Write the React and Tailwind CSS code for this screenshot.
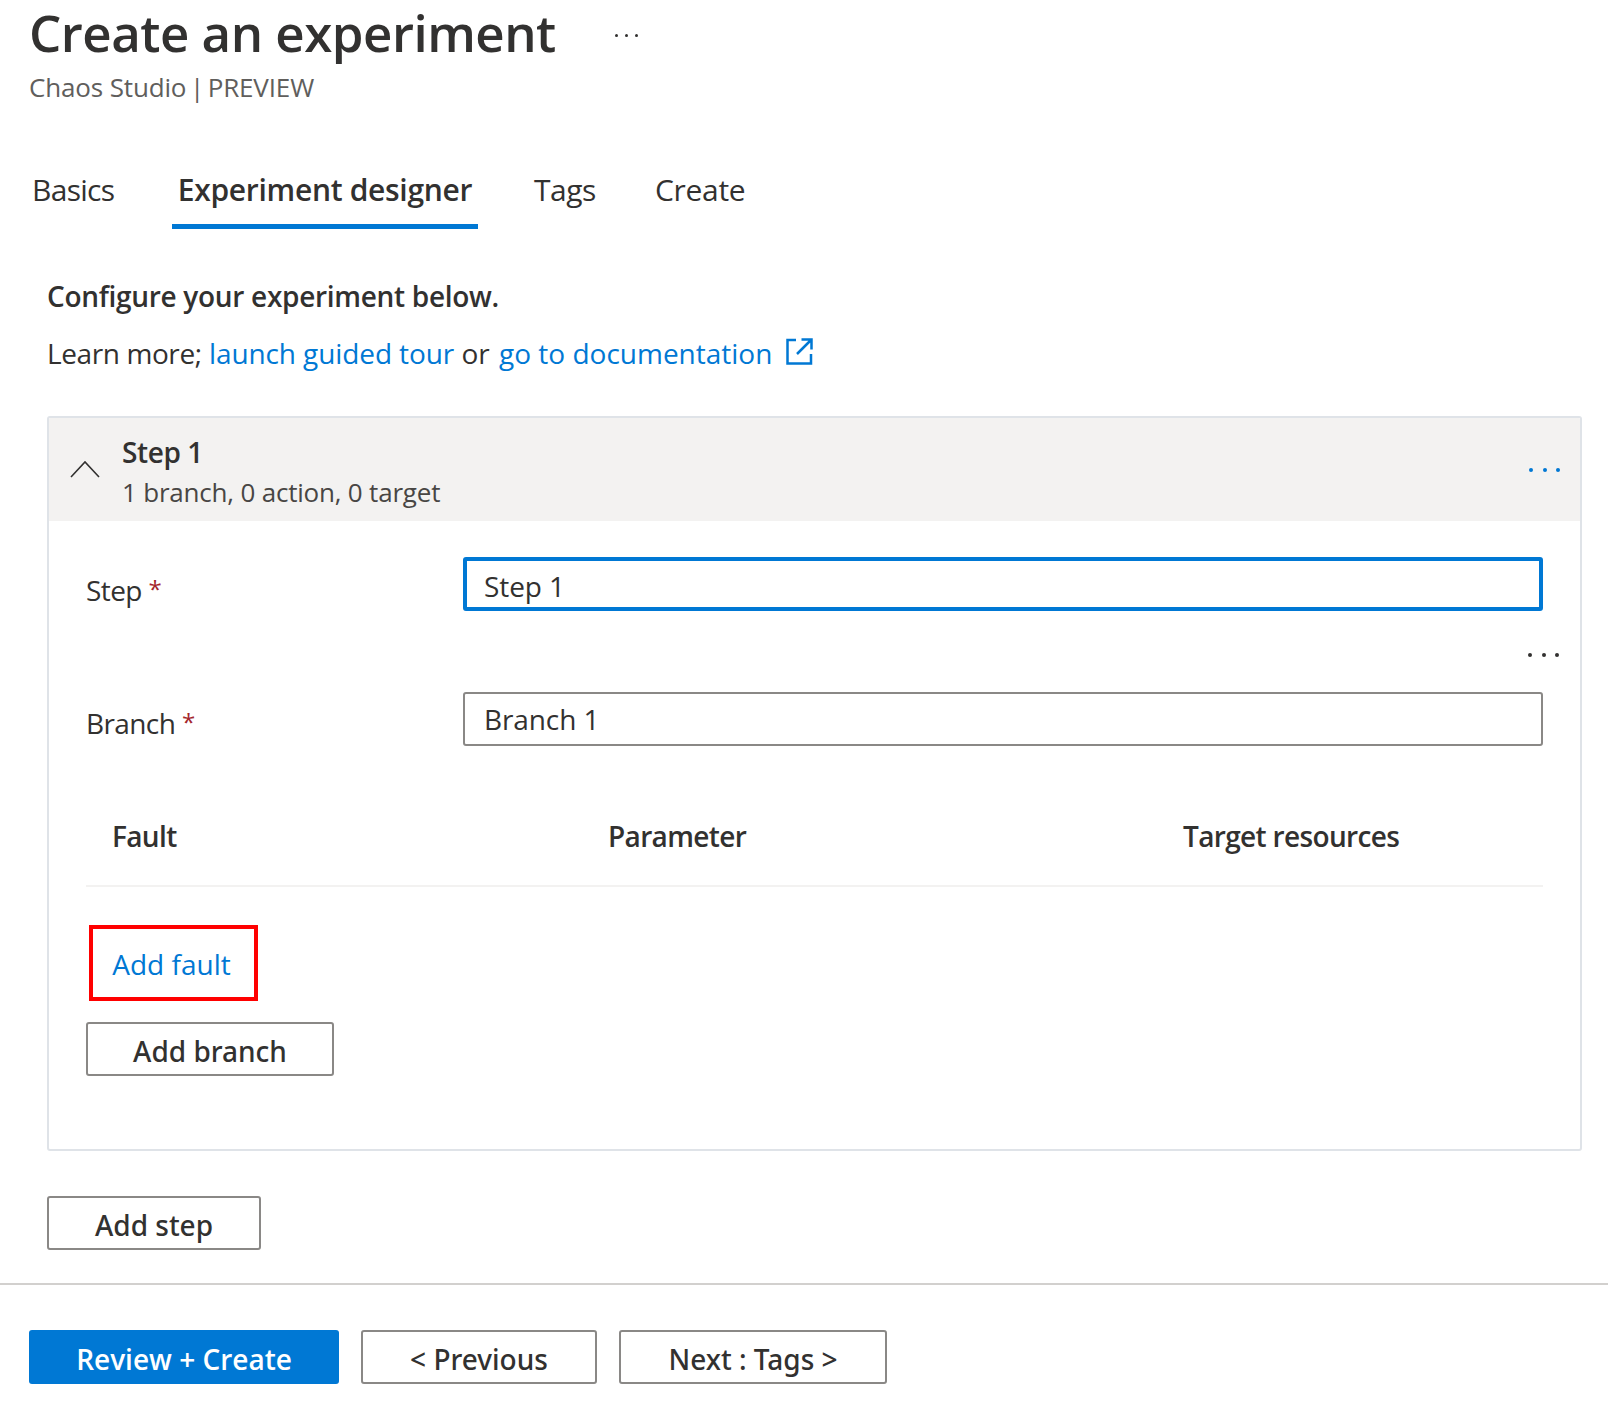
const tabs = [
  { label: 'Basics', className: 'w-[143px] pl-[3px] tracking-[-0.7px] pt-[1px]' },
  { label: 'Experiment designer', className: 'w-[306px] justify-center pt-[6px] font-semibold tracking-[-0.3px] border-b-[5px] border-[#0078d4]' },
  { label: 'Tags', className: 'w-[177px] pl-[56px] tracking-[-0.5px] pt-[1px]' },
  { label: 'Create', className: 'tracking-[-0.3px] pt-[1px]' },
];

function Dots({ color = 'bg-[#323130]' }) {
  return (
    <div className="flex gap-[9.5px]">
      <span className={`h-[4px] w-[4px] rounded-full ${color}`} />
      <span className={`h-[4px] w-[4px] rounded-full ${color}`} />
      <span className={`h-[4px] w-[4px] rounded-full ${color}`} />
    </div>
  );
}

function Field({ label, value, focused }) {
  return (
    <div className="flex items-start">
      <div className={`w-[377px] text-[28px] leading-[38px] tracking-[-0.6px] ${focused ? 'pt-[14px]' : 'pt-[12px]'}`}>
        {label} <span className="relative -top-[3px] text-[24px] text-[#a4262c]">*</span>
      </div>
      <div className={`flex h-[54px] flex-1 items-center rounded-[3px] bg-white text-[28px] tracking-[-0.1px] ${focused ? 'border-[4px] border-[#0078d4] px-[17px] pt-[4px]' : 'border-2 border-[#8a8886] px-[19px]'}`}>
        {value}
      </div>
    </div>
  );
}

function OutlineButton({ children, className }) {
  return (
    <button className={`flex h-[54px] items-center justify-center rounded-[3px] border-2 border-[#8a8886] bg-white pt-[3px] text-[28px] font-medium tracking-[0px] text-[#323130] [font-family:'Noto_Sans',sans-serif] ${className}`}>
      {children}
    </button>
  );
}

export default function App() {
  return (
    <div className="h-[1413px] overflow-hidden bg-white text-[#323130] [font-family:'Open_Sans',sans-serif]">
      <div className="px-[29px]">
        <div className="flex h-[64px] items-center">
          <h1 className="text-[51px] leading-[64px] font-semibold tracking-[-0.5px]">Create an experiment</h1>
          <div className="mt-[6px] ml-[59px] flex gap-[7px]">
            <span className="h-[3px] w-[3px] rounded-full bg-[#323130]" />
            <span className="h-[3px] w-[3px] rounded-full bg-[#323130]" />
            <span className="h-[3px] w-[3px] rounded-full bg-[#323130]" />
          </div>
        </div>
        <p className="mt-[5px] text-[26px] leading-[36px] tracking-[-0.15px] text-[#605e5c]">Chaos Studio<span className="mx-[-3px]"> | </span>PREVIEW</p>

        <div className="mt-[44px] flex h-[80px] text-[30px]">
          {tabs.map((tab) => (
            <div key={tab.label} className={`flex h-[80px] items-center ${tab.className}`}>
              {tab.label}
            </div>
          ))}
        </div>
      </div>

      <div className="px-[47px]">
        <p className="mt-[47px] text-[28px] leading-[40px] font-semibold tracking-[-0.3px]">Configure your experiment below.</p>
        <p className="mt-[17px] flex items-center text-[28px] leading-[40px]">
          <span className="tracking-[-0.4px]">Learn more;</span>&nbsp;<span className="tracking-[-0.1px] text-[#0078d4]">launch guided tour</span>&nbsp;or&nbsp;
          <span className="ml-[2px] text-[#0078d4]">go to documentation</span>
          <svg className="-mt-[4px] ml-[14px] h-[27px] w-[27px]" viewBox="0 0 27 27" fill="none" stroke="#0078d4" strokeWidth="2.5">
            <path d="M10 2H1.5v23.5h23.5V16" />
            <path d="M15.5 1.5h10v10M25.5 1.5 11 16" />
          </svg>
        </p>

        <div className="mt-[43px] h-[735px] w-[1535px] overflow-hidden rounded-[3px] border-2 border-[#dfe3e8]">
          <div className="flex h-[103px] items-center bg-[#f3f2f1] pr-[20px] pl-[21px]">
            <svg className="-mt-[2px] h-[18px] w-[30px] shrink-0" viewBox="0 0 30 18" fill="none" stroke="#323130" strokeWidth="1.6">
              <path d="M1 17 15 2l14 15" />
            </svg>
            <div className="ml-[22px] flex-1 pt-[5px]">
              <div className="text-[28px] leading-[38px] font-semibold tracking-[-0.4px]">Step 1</div>
              <div className="mt-[2px] text-[26px] leading-[38px] tracking-[-0.2px] text-[#484644]">1 branch, 0 action, 0 target</div>
            </div>
            <Dots color="bg-[#0078d4]" />
          </div>

          <div className="px-[37px]">
            <div className="mt-[36px]">
              <Field label="Step" value="Step 1" focused />
            </div>
            <div className="mt-[42px] flex justify-end">
              <div className="-mr-[16px]">
                <Dots />
              </div>
            </div>
            <div className="mt-[35px]">
              <Field label="Branch" value="Branch 1" />
            </div>

            <div className="mt-[62px] flex h-[79px] items-center border-b-2 border-[#f3f2f1] pb-[22px] text-[28px] font-semibold tracking-[-0.65px]">
              <div className="w-[522px] pl-[26px]">Fault</div>
              <div className="w-[575px]">Parameter</div>
              <div>Target resources</div>
            </div>

            <div className="mt-[38px] ml-[3px] flex h-[76px] w-[169px] items-center justify-center border-4 border-[#ff0000] pt-[2px] pr-[4px] text-[28px] text-[#0078d4]">
              Add fault
            </div>
            <OutlineButton className="mt-[21px] w-[248px]">Add branch</OutlineButton>
          </div>
        </div>

        <OutlineButton className="mt-[45px] w-[214px]">Add step</OutlineButton>
      </div>

      <div className="mt-[33px] border-t-2 border-[#d2d0ce] px-[29px] pt-[45px]">
        <div className="flex gap-[22px]">
          <button className="flex h-[54px] w-[310px] items-center justify-center rounded-[3px] bg-[#0078d4] pt-[3px] text-[28px] font-semibold text-white">
            Review + Create
          </button>
          <OutlineButton className="w-[236px]">&lt; Previous</OutlineButton>
          <OutlineButton className="w-[268px]">Next : Tags &gt;</OutlineButton>
        </div>
      </div>
    </div>
  );
}
